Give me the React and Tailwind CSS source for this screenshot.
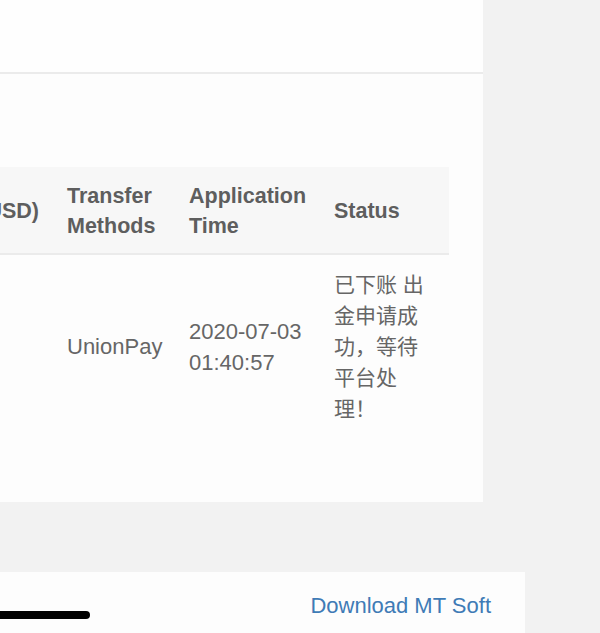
import React from "react";

const font = { fontFamily: '"Liberation Sans", "Noto Sans CJK SC", Arial, sans-serif' };

const rows = [
  {
    amount: "",
    method: "UnionPay",
    time: ["2020-07-03", "01:40:57"],
    status: "已下账 出金申请成功，等待平台处理！",
  },
];

function WithdrawTable() {
  return (
    <div className="w-[578px] -ml-[129px]">
      <div className="grid grid-cols-[182px_122px_145px_129px] bg-[#f7f7f7] border-b-2 border-[#ebebeb] text-[21.5px] leading-[30px] font-bold text-[#5e5e5e]">
        <div className="px-[14px] pt-[14px] pb-[12px] flex items-center justify-end whitespace-nowrap">
          Amount (USD)
        </div>
        <div className="px-[14px] pt-[14px] pb-[12px] flex flex-col justify-center">
          <span>Transfer</span>
          <span>Methods</span>
        </div>
        <div className="px-[14px] pt-[14px] pb-[12px] flex flex-col justify-center">
          <span>Application</span>
          <span>Time</span>
        </div>
        <div className="px-[14px] pt-[14px] pb-[12px] flex items-center">Status</div>
      </div>
      {rows.map((r, i) => (
        <div
          key={i}
          className="grid grid-cols-[182px_122px_145px_129px] text-[#666666]"
        >
          <div className="px-[14px] py-[14px] flex items-center justify-end text-[22px]">
            {r.amount}
          </div>
          <div className="px-[14px] py-[14px] flex items-center text-[22px] leading-[31px]">
            {r.method}
          </div>
          <div className="px-[14px] py-[14px] flex flex-col justify-center text-[22px] leading-[31px]">
            <span>{r.time[0]}</span>
            <span>{r.time[1]}</span>
          </div>
          <div className="px-[14px] py-[14px] flex items-center text-[21px] leading-[31px]">
            <p className="w-[100px]">{r.status}</p>
          </div>
        </div>
      ))}
    </div>
  );
}

export default function App() {
  return (
    <div
      className="relative w-[600px] h-[633px] overflow-hidden bg-[#f2f2f2]"
      style={font}
    >
      <div className="w-[483px] h-[502px] bg-[#fdfdfd] overflow-hidden">
        <div className="h-[74px] bg-[#fefefe] border-b-2 border-[#ebebeb]" />
        <div className="pt-[93px]">
          <WithdrawTable />
        </div>
      </div>

      <div className="mt-[70px] w-[525px] h-[61px] bg-[#fdfdfd] flex items-center justify-end pr-[34px] pt-[5px]">
        <span className="text-[22px] text-[#3f7bb6]">Download MT Soft</span>
      </div>

      <div className="absolute left-[-40px] top-[611px] w-[130px] h-[8px] rounded-full bg-black" />
    </div>
  );
}
